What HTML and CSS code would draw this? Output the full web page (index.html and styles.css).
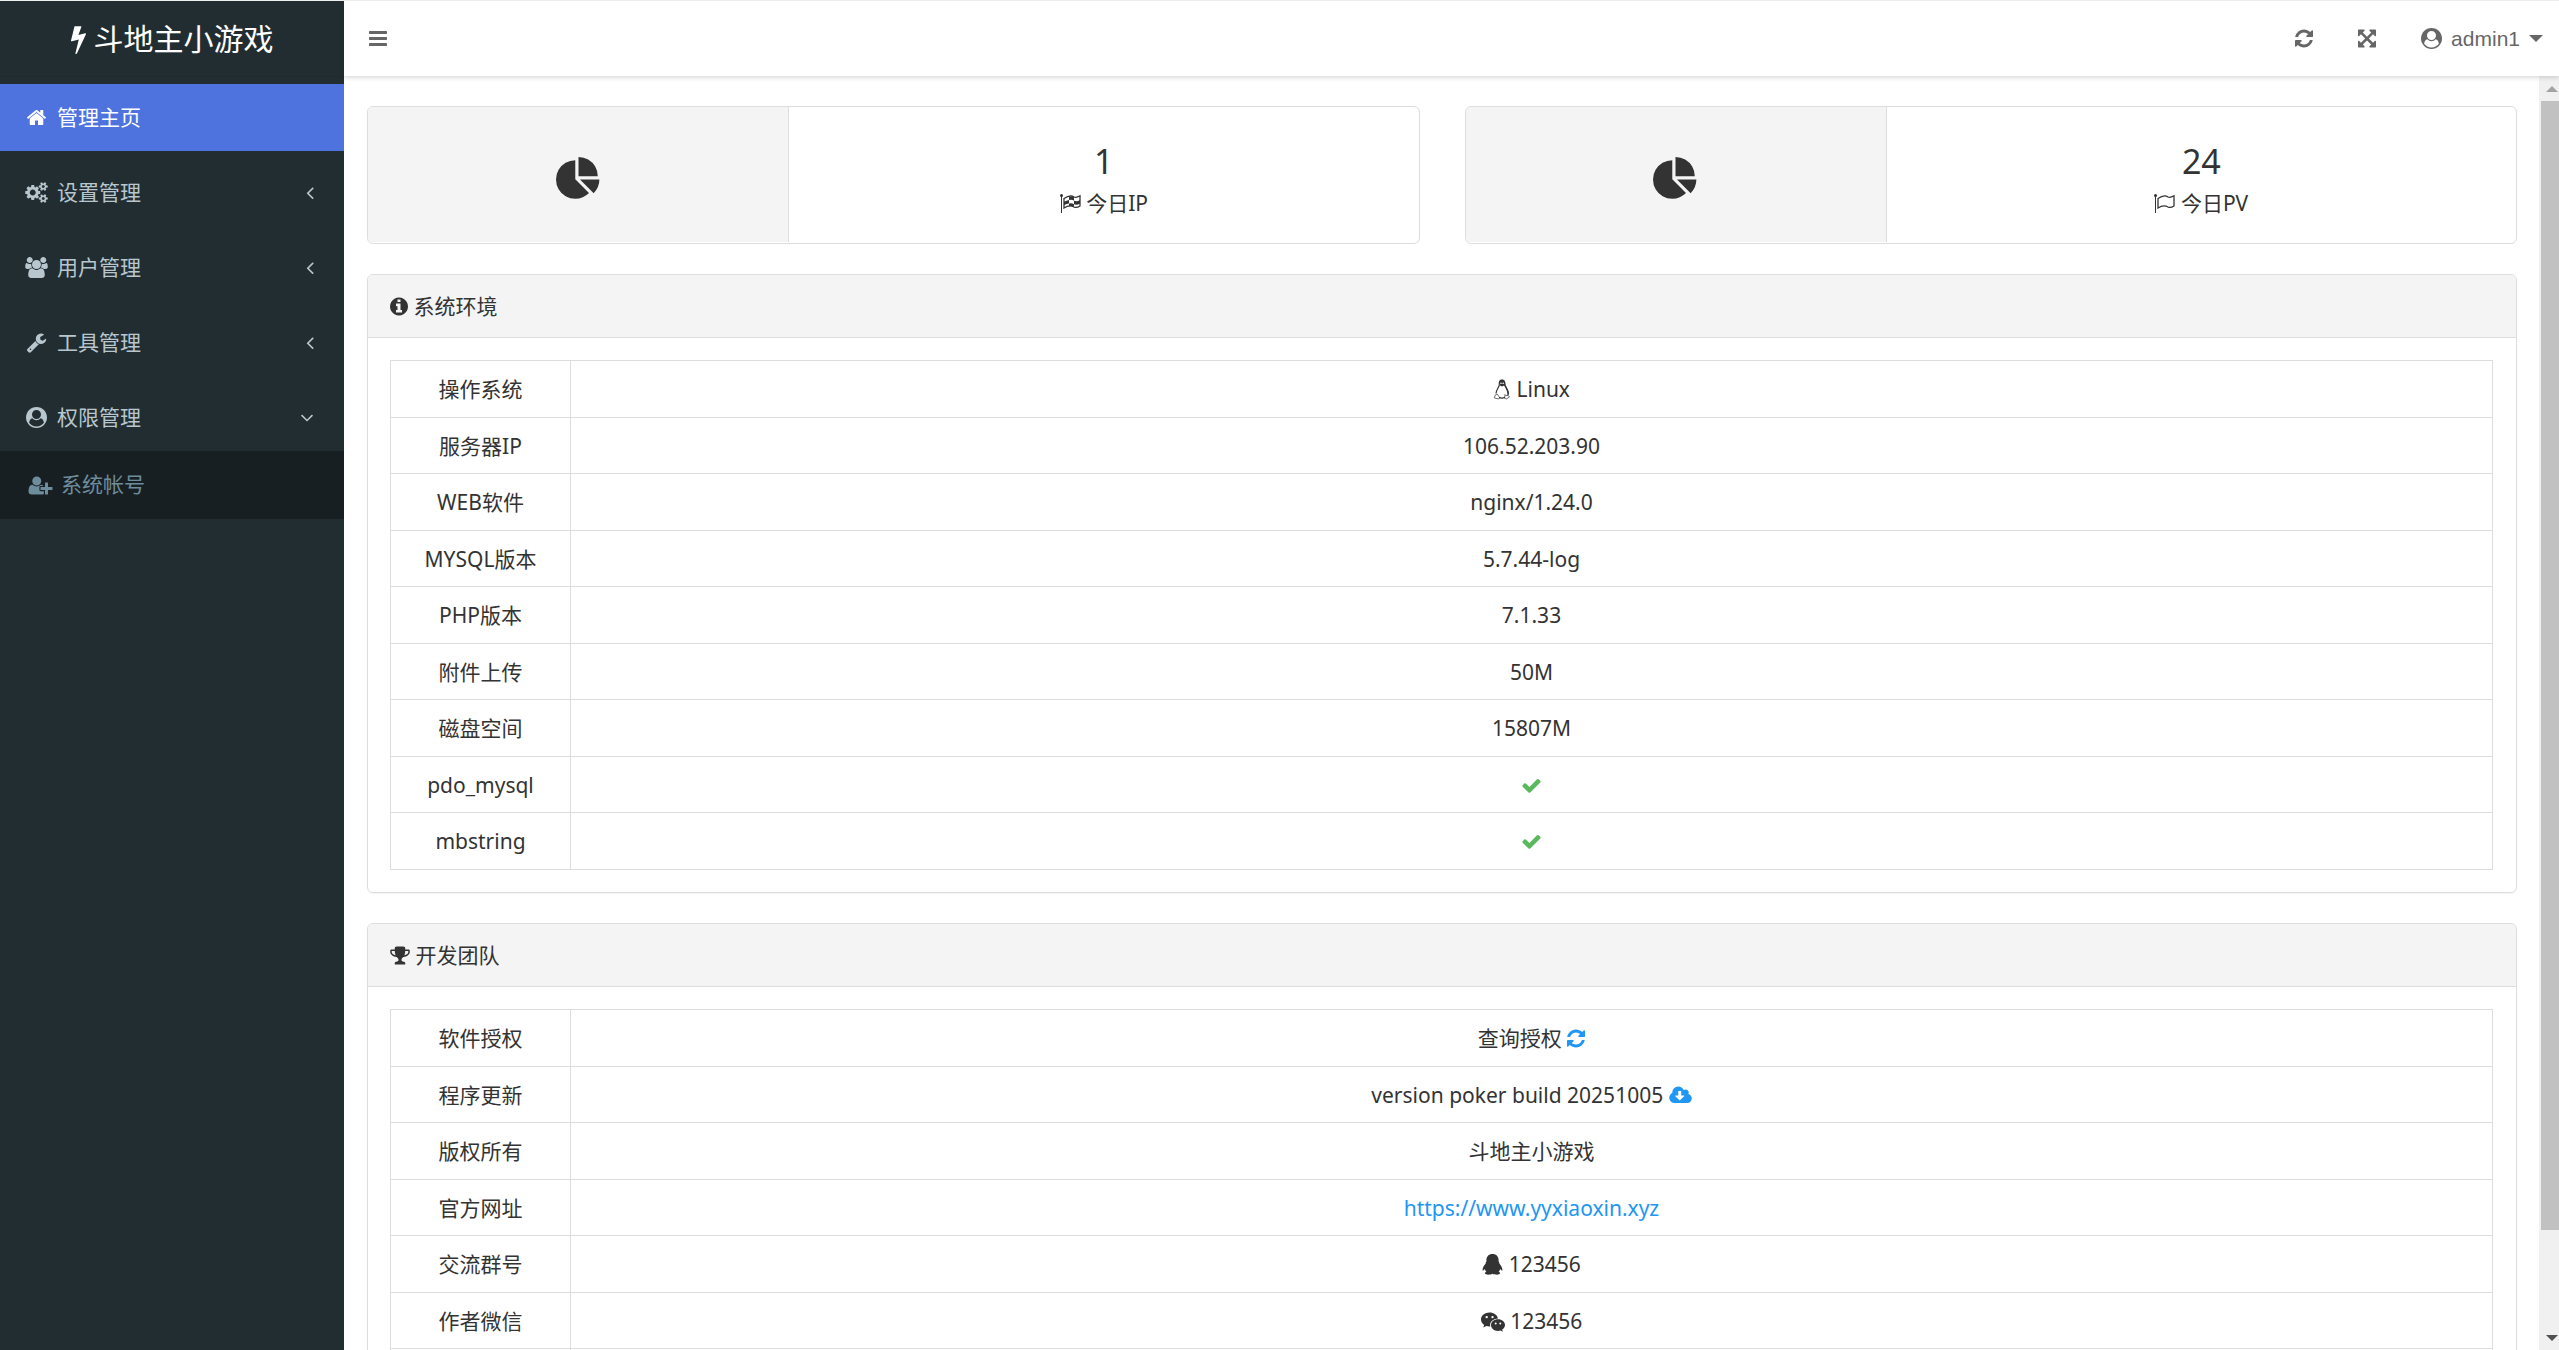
FILE: index.html
```html
<!DOCTYPE html>
<html lang="zh-CN">
<head>
<meta charset="utf-8">
<title>斗地主小游戏</title>
<link rel="stylesheet" href="styles.css">
</head>
<body>
<svg class="sprite" aria-hidden="true">
  <symbol id="bolt" viewBox="448 0 896 1792"><path d="M1333 566q18 20 7 44l-540 1157q-13 25-42 25-4 0-14-2-17-5-25.500-19t-4.500-30l197-808-406 101q-4 1-12 1-18 0-31-11-18-15-13-39l201-825q4-14 16-23t28-9h328q19 0 32 12.500t13 29.500q0 8-5 18l-171 463 396-98q8-2 12-2 19 0 34 15z"/></symbol>
  <symbol id="bars" viewBox="128 0 1536 1792"><path d="M1664 1344v128q0 26-19 45t-45 19h-1408q-26 0-45-19t-19-45v-128q0-26 19-45t45-19h1408q26 0 45 19t19 45zm0-512v128q0 26-19 45t-45 19h-1408q-26 0-45-19t-19-45v-128q0-26 19-45t45-19h1408q26 0 45 19t19 45zm0-512v128q0 26-19 45t-45 19h-1408q-26 0-45-19t-19-45v-128q0-26 19-45t45-19h1408q26 0 45 19t19 45z"/></symbol>
  <symbol id="refresh" viewBox="128 0 1536 1792"><path d="M1639 1056q0 5-1 7-64 268-268 434.500t-478 166.500q-146 0-282.500-55t-243.500-157l-129 129q-19 19-45 19t-45-19-19-45v-448q0-26 19-45t45-19h448q26 0 45 19t19 45-19 45l-137 137q71 66 161 102t187 36q134 0 250-65t186-179q11-17 53-117 8-23 30-23h192q13 0 22.500 9.500t9.500 22.500zm25-800v448q0 26-19 45t-45 19h-448q-26 0-45-19t-19-45 19-45l138-138q-148-137-349-137-134 0-250 65t-186 179q-11 17-53 117-8 23-30 23h-199q-13 0-22.500-9.500t-9.500-22.500v-7q65-268 270-434.500t480-166.500q146 0 284 55.500t245 156.500l130-129q19-19 45-19t45 19 19 45z"/></symbol>
  <symbol id="expand" viewBox="128 0 1536 1792"><path d="M1411 541l-355 355 355 355 144-144q29-31 70-14 39 17 39 59v448q0 26-19 45t-45 19h-448q-42 0-59-40-17-39 14-69l144-144-355-355-355 355 144 144q31 30 14 69-17 40-59 40h-448q-26 0-45-19t-19-45v-448q0-42 40-59 39-17 69 14l144 144 355-355-355-355-144 144q-19 19-45 19-12 0-24-5-40-17-40-59v-448q0-26 19-45t45-19h448q42 0 59 40 17 39-14 69l-144 144 355 355 355-355-144-144q-31-30-14-69 17-40 59-40h448q26 0 45 19t19 45v448q0 42-39 59-13 5-25 5-26 0-45-19z"/></symbol>
  <symbol id="home" viewBox="64 0 1664 1792"><path d="M1472 992v480q0 26-19 45t-45 19h-384v-384h-256v384h-384q-26 0-45-19t-19-45v-480q0-1 .5-3t.5-3l575-474 575 474q1 2 1 6zm223-69l-62 74q-8 9-21 11h-3q-13 0-21-7l-692-577-692 577q-12 8-24 7-13-2-21-11l-62-74q-8-10-7-23.500t11-21.500l719-599q32-26 76-26t76 26l244 204v-195q0-14 9-23t23-9h192q14 0 23 9t9 23v408l219 182q10 8 11 21.500t-7 23.500z"/></symbol>
  <symbol id="cogs" viewBox="-64 0 1920 1792"><path d="M832 896q0-106-75-181t-181-75-181 75-75 181 75 181 181 75 181-75 75-181zm768 512q0-52-38-90t-90-38-90 38-38 90q0 53 37.500 90.500t90.500 37.500 90.500-37.500 37.500-90.500zm0-1024q0-52-38-90t-90-38-90 38-38 90q0 53 37.500 90.500t90.500 37.500 90.500-37.500 37.500-90.500zm-384 421v185q0 10-7 19.500t-16 10.500l-155 24q-11 35-32 76 34 48 90 115 7 11 7 20 0 12-7 19-23 30-82.500 89.500t-78.500 59.500q-11 0-21-7l-115-90q-37 19-77 31-11 108-23 155-7 24-30 24h-186q-11 0-20-7.500t-10-17.500l-23-153q-34-10-75-31l-118 89q-7 7-20 7-11 0-21-8-144-133-144-160 0-9 7-19 10-14 41-53t47-61q-23-44-35-82l-152-24q-10-1-17-9.500t-7-19.500v-185q0-10 7-19.500t16-10.500l155-24q11-35 32-76-34-48-90-115-7-11-7-20 0-12 7-20 22-30 82-89t79-59q11 0 21 7l115 90q34-18 77-32 11-108 23-154 7-24 30-24h186q11 0 20 7.500t10 17.500l23 153q34 10 75 31l118-89q8-7 20-7 11 0 21 8 144 133 144 160 0 9-7 19-12 16-42 54t-45 60q23 48 34 82l152 23q10 2 17 10.500t7 19.500zm640 533v140q0 16-149 31-12 27-30 52 51 113 51 138 0 4-4 7-122 71-124 71-8 0-46-47t-52-68q-20 2-30 2t-30-2q-14 21-52 68t-46 47q-2 0-124-71-4-3-4-7 0-25 51-138-18-25-30-52-149-15-149-31v-140q0-16 149-31 13-29 30-52-51-113-51-138 0-4 4-7 4-2 35-20t59-34 30-16q8 0 46 46.500t52 67.500q20-2 30-2t30 2q51-71 92-112l6-2q4 0 124 70 4 3 4 7 0 25-51 138 17 23 30 52 149 15 149 31zm0-1024v140q0 16-149 31-12 27-30 52 51 113 51 138 0 4-4 7-122 71-124 71-8 0-46-47t-52-68q-20 2-30 2t-30-2q-14 21-52 68t-46 47q-2 0-124-71-4-3-4-7 0-25 51-138-18-25-30-52-149-15-149-31v-140q0-16 149-31 13-29 30-52-51-113-51-138 0-4 4-7 4-2 35-20t59-34 30-16q8 0 46 46.500t52 67.500q20-2 30-2t30 2q51-71 92-112l6-2q4 0 124 70 4 3 4 7 0 25-51 138 17 23 30 52 149 15 149 31z"/></symbol>
  <symbol id="users" viewBox="0 0 1920 1792"><path d="M593 896q-162 5-265 128h-134q-82 0-138-40.500t-56-118.500q0-353 124-353 6 0 43.500 21t97.500 42.500 119 21.500q67 0 133-23-5 37-5 66 0 139 81 256zm1071 637q0 120-73 189.500t-194 69.500h-874q-121 0-194-69.500t-73-189.500q0-53 3.500-103.500t14-109 26.500-108.500 43-97.500 62-81 85.500-53.500 111.500-20q10 0 43 21.500t73 48 107 48 135 21.500 135-21.500 107-48 73-48 43-21.500q61 0 111.500 20t85.500 53.500 62 81 43 97.500 26.500 108.500 14 109 3.500 103.500zm-1024-1277q0 106-75 181t-181 75-181-75-75-181 75-181 181-75 181 75 75 181zm704 384q0 159-112.500 271.500t-271.500 112.500-271.500-112.500-112.500-271.500 112.500-271.500 271.500-112.500 271.500 112.500 112.500 271.500zm576 225q0 78-56 118.500t-138 40.500h-134q-103-123-265-128 81-117 81-256 0-29-5-66 66 23 133 23 59 0 119-21.500t97.500-42.500 43.500-21q124 0 124 353zm-128-609q0 106-75 181t-181 75-181-75-75-181 75-181 181-75 181 75 75 181z"/></symbol>
  <symbol id="wrench" viewBox="64 0 1664 1792"><path d="M448 1472q0-26-19-45t-45-19-45 19-19 45 19 45 45 19 45-19 19-45zm644-420l-682 682q-37 37-90 37-52 0-91-37l-106-108q-38-36-38-90 0-53 38-91l681-681q39 98 114.500 173.500t173.500 114.500zm634-435q0 39-23 106-47 134-164.500 217.500t-258.500 83.500q-185 0-316.500-131.500t-131.500-316.500 131.500-316.500 316.500-131.500q58 0 121.500 16.500t107.500 46.500q16 11 16 28t-16 28l-293 169v224l193 107q5-3 79-48.500t135.500-81 70.500-35.500q15 0 23.500 10t8.500 25z"/></symbol>
  <symbol id="user-circle" viewBox="0 0 1792 1792"><path d="M1523 1339q-22-155-87.500-257.500t-184.500-118.500q-67 74-159.500 115.500t-195.500 41.500-195.500-41.500-159.500-115.500q-119 16-184.500 118.500t-87.500 257.500q106 150 271 237.500t356 87.500 356-87.500 271-237.500zm-243-699q0-159-112.500-271.500t-271.500-112.500-271.500 112.500-112.500 271.500 112.500 271.500 271.500 112.500 271.500-112.500 112.500-271.500zm512 256q0 182-71 347.500t-190.500 286-285.500 191.500-349 71q-182 0-348-71t-286-191-191-286-71-348 71-348 191-286 286-191 348-71 348 71 286 191 191 286 71 348z"/></symbol>
  <symbol id="user-plus" viewBox="0 0 2048 1792"><path d="M704 896q-159 0-271.500-112.500t-112.500-271.500 112.500-271.500 271.500-112.500 271.500 112.500 112.500 271.500-112.500 271.500-271.500 112.500zm960 128h352q13 0 22.500 9.500t9.500 22.500v192q0 13-9.500 22.500t-22.500 9.500h-352v352q0 13-9.500 22.500t-22.500 9.500h-192q-13 0-22.500-9.500t-9.500-22.500v-352h-352q-13 0-22.500-9.500t-9.500-22.500v-192q0-13 9.500-22.500t22.500-9.500h352v-352q0-13 9.500-22.500t22.500-9.500h192q13 0 22.500 9.500t9.500 22.500v352zm-736 224q0 52 38 90t90 38h256v238q-68 50-171 50h-874q-121 0-194-69t-73-190q0-53 3.500-103.500t14-109 26.500-108.500 43-97.500 62-81 85.500-53.500 111.500-20q19 0 39 17 79 61 154.500 91.500t164.500 30.500 164.500-30.500 154.500-91.500q20-17 39-17 132 0 217 96h-223q-52 0-90 38t-38 90v192z"/></symbol>
  <symbol id="angle-left" viewBox="576 0 640 1792"><path d="M1203 544q0 13-10 23l-393 393 393 393q10 10 10 23t-10 23l-50 50q-10 10-23 10t-23-10l-466-466q-10-10-10-23t10-23l466-466q10-10 23-10t23 10l50 50q10 10 10 23z"/></symbol>
  <symbol id="angle-down" viewBox="320 0 1152 1792"><path d="M1395 736q0 13-10 23l-466 466q-10 10-23 10t-23-10l-466-466q-10-10-10-23t10-23l50-50q10-10 23-10t23 10l393 393 393-393q10-10 23-10t23 10l50 50q10 10 10 23z"/></symbol>
  <symbol id="pie" viewBox="0 0 1792 1792"><path d="M768 890l546 546q-106 108-247.500 168t-298.500 60q-209 0-385.500-103t-279.500-279.500-103-385.500 103-385.500 279.500-279.500 385.500-103v762zm187 6h773q0 157-60 298.500t-168 247.500zm709-128h-768v-768q209 0 385.500 103t279.500 279.500 103 385.500z"/></symbol>
  <symbol id="info" viewBox="128 0 1536 1792"><path d="M1152 1376v-160q0-14-9-23t-23-9h-96v-512q0-14-9-23t-23-9h-320q-14 0-23 9t-9 23v160q0 14 9 23t23 9h96v320h-96q-14 0-23 9t-9 23v160q0 14 9 23t23 9h448q14 0 23-9t9-23zm-128-896v-160q0-14-9-23t-23-9h-192q-14 0-23 9t-9 23v160q0 14 9 23t23 9h192q14 0 23-9t9-23zm640 416q0 209-103 385.500t-279.500 279.500-385.500 103-385.500-103-279.500-279.500-103-385.500 103-385.500 279.500-279.500 385.500-103 385.500 103 279.500 279.500 103 385.500z"/></symbol>
  <symbol id="trophy" viewBox="64 0 1664 1792"><path d="M522 883q-74-162-74-371h-256v96q0 78 94.500 162t235.500 113zm1078-275v-96h-256q0 209-74 371 141-29 235.500-113t94.500-162zm128-128v128q0 71-41.500 143t-112 130-173 97.500-215.500 44.500q-42 54-95 95-38 34-52.500 72.500t-14.500 89.500q0 54 30.500 91t97.500 37q75 0 133.500 45.500t58.500 114.500v64q0 14-9 23t-23 9h-832q-14 0-23-9t-9-23v-64q0-69 58.500-114.500t133.500-45.500q67 0 97.500-37t30.500-91q0-51-14.500-89.500t-52.500-72.500q-53-41-95-95-113-5-215.500-44.500t-173-97.500-112-130-41.500-143v-128q0-40 28-68t68-28h288v-96q0-66 47-113t113-47h576q66 0 113 47t47 113v96h288q40 0 68 28t28 68z"/></symbol>
  <symbol id="check" viewBox="0 0 1792 1792"><path d="M1671 566q0 40-28 68l-724 724-136 136q-28 28-68 28t-68-28l-136-136-362-362q-28-28-28-68t28-68l136-136q28-28 68-28t68 28l294 295 656-657q28-28 68-28t68 28l136 136q28 28 28 68z"/></symbol>
  <symbol id="cloud" viewBox="-64 0 1920 1792"><path d="M1216 928q0-14-9-23t-23-9h-224v-352q0-13-9.500-22.500t-22.500-9.500h-192q-13 0-22.500 9.500t-9.500 22.500v352h-224q-13 0-22.500 9.500t-9.500 22.500q0 14 9 23l352 352q9 9 23 9t23-9l351-351q10-12 10-24zm640 224q0 159-112.500 271.500t-271.500 112.500h-1088q-185 0-316.500-131.500t-131.500-316.500q0-130 70-240t188-165q-2-30-2-43 0-212 150-362t362-150q156 0 285.500 87t188.500 231q71-62 166-62 106 0 181 75t75 181q0 76-41 138 130 31 213.500 135.500t83.500 238.500z"/></symbol>
  <symbol id="flag" viewBox="0 0 21 21"><circle cx="1.500" cy="2.500" r="1.500"/><path d="M1 3h1v17H1z"/><path d="M4 5.500C9 2 12 2.500 14 4c2 1 4 0 6-1.200V13c-2 1.300-4 2-6 1C11 12.300 8 12.500 4 15z" fill="none" stroke="currentColor" stroke-width="1.300"/></symbol>
  <symbol id="flag-check" viewBox="0 0 21 21"><circle cx="1.500" cy="2.500" r="1.500"/><path d="M1 3h1v17H1z"/><path d="M4 5.500C9 2 12 2.500 14 4c2 1 4 0 6-1.200V13c-2 1.300-4 2-6 1C11 12.300 8 12.500 4 15z" fill="none" stroke="currentColor" stroke-width="1.300"/><path d="M9 3.500q3-1 5 .7v3.600q-2-1.700-5-.7zM4 8.800q2.500-1.500 5-1.900v3.600q-2.500.3-5 1.700zM14 7.700q3 1.300 6-.8v3.500q-3 2-6 .9zM9 10.400q3-.7 5 .8V14q-2-1.500-5-.8z"/></symbol>
  <symbol id="linux" viewBox="0 0 18 21"><path d="M6.300 5.500C6 2.800 7 1.200 9 1.200s3 1.500 2.900 4c0 2.600 3.400 5 3.400 9.300 0 1-.2 1.500-.6 2" fill="none" stroke="currentColor" stroke-width="1.200"/><path d="M6.300 5.500c.3 2.500-3.300 5.200-3.300 9M6 18.600q3 1 6-.2" fill="none" stroke="currentColor" stroke-width="1.200"/><path d="M6 4.500C5.800 2 7 .8 9 .8s3.200 1.300 3.100 4.200c.1 2.800 3.600 5.500 3.600 9.500l-1.200 1.400c0-3.700-1.500-6.200-3.400-9.300L9 7.600 7 6.400z"/><g fill="#fff"><circle cx="8" cy="4.300" r=".8"/><circle cx="10.200" cy="4.300" r=".8"/></g><path d="M2.400 15.900l1.800-.8 2.600 3.500-1.300 1.400-4.200-1.100zM12 15.500l1 1.300 1.800-.6 1.700 1.800-3.300 2-1.600-.8z" fill="none" stroke="currentColor" stroke-width=".7"/></symbol>
  <symbol id="qq" viewBox="0 0 21 21"><path d="M10.500 0C6.600 0 4.400 2.700 4.400 6v1.500C3.700 8.200 3.600 9 3.700 9.500 2 11.500.5 13.800.6 16c.1 1.300.8.700 2.100-1 .3 1 .9 2 1.700 2.800-1.200.5-1.700 1-1.400 1.800.5 1.600 5.500 1.300 7.500.2 2 1.100 7 1.400 7.500-.2.300-.8-.2-1.300-1.400-1.800.8-.8 1.400-1.800 1.700-2.800 1.300 1.700 2 2.300 2.100 1 .1-2.200-1.400-4.500-3.100-6.500.1-.5 0-1.300-.7-2V6c0-3.300-2.200-6-6.100-6z"/></symbol>
  <symbol id="wechat" viewBox="0 0 24 21"><path fill-rule="evenodd" d="M8.500 1.500C3.800 1.500 0 4.600 0 8.500c0 2.200 1.200 4.100 3.100 5.400L2.300 16.500l3-1.500c1.100.3 2.100.5 3.200.5h.8c-1.100-4.300 2.700-8 7.700-8C16.300 3.900 12.700 1.500 8.500 1.500zM5.700 4.900a1.200 1.200 0 1 1 0 2.400 1.200 1.200 0 0 1 0-2.400zm5.800 0a1.200 1.200 0 1 1 0 2.400 1.200 1.200 0 0 1 0-2.400z"/><path fill-rule="evenodd" d="M17 8.200c-4 0-7 2.600-7 5.800s3 5.900 7 5.900c.9 0 1.700-.2 2.500-.4l2.300 1.300-.6-2.200c1.700-1.200 2.800-2.700 2.800-4.600 0-3.200-3.100-5.800-7-5.800zm-2.300 3.200a1 1 0 1 1 0 2 1 1 0 0 1 0-2zm4.600 0a1 1 0 1 1 0 2 1 1 0 0 1 0-2z"/></symbol>
</svg>

<div class="app">
  <aside class="sidebar">
    <h1 class="brand"><svg class="brand-icon"><use href="#bolt"/></svg> 斗地主小游戏</h1>
    <nav class="menu">
      <a class="item active" href="#"><svg class="fw"><use href="#home"/></svg><span>管理主页</span></a>
      <a class="item" href="#"><svg class="fw"><use href="#cogs"/></svg><span>设置管理</span><svg class="arrow"><use href="#angle-left"/></svg></a>
      <a class="item" href="#"><svg class="fw"><use href="#users"/></svg><span>用户管理</span><svg class="arrow"><use href="#angle-left"/></svg></a>
      <a class="item" href="#"><svg class="fw"><use href="#wrench"/></svg><span>工具管理</span><svg class="arrow"><use href="#angle-left"/></svg></a>
      <a class="item" href="#"><svg class="fw"><use href="#user-circle"/></svg><span>权限管理</span><svg class="arrow open"><use href="#angle-down"/></svg></a>
      <a class="item sub" href="#"><svg class="fw"><use href="#user-plus"/></svg><span>系统帐号</span></a>
    </nav>
  </aside>

  <div class="main">
    <header class="topbar">
      <button class="tool" type="button" aria-label="菜单"><svg class="icon w18"><use href="#bars"/></svg></button>
      <div class="tools">
        <button class="tool" type="button" aria-label="刷新"><svg class="icon w18"><use href="#refresh"/></svg></button>
        <button class="tool" type="button" aria-label="全屏"><svg class="icon w18"><use href="#expand"/></svg></button>
        <button class="tool user" type="button"><svg class="icon w21"><use href="#user-circle"/></svg><span>admin1</span><i class="caret"></i></button>
      </div>
    </header>

    <div class="view">
      <main class="content">
        <div class="stats">
          <section class="stat">
            <div class="stat-icon"><svg class="pie"><use href="#pie"/></svg></div>
            <div class="stat-body"><div class="num">1</div><div class="label"><svg class="icon w21"><use href="#flag-check"/></svg> 今日IP</div></div>
          </section>
          <section class="stat">
            <div class="stat-icon"><svg class="pie"><use href="#pie"/></svg></div>
            <div class="stat-body"><div class="num">24</div><div class="label"><svg class="icon w21"><use href="#flag"/></svg> 今日PV</div></div>
          </section>
        </div>

        <section class="panel">
          <h2 class="panel-head"><svg class="icon w18"><use href="#info"/></svg> 系统环境</h2>
          <div class="panel-body">
            <table class="grid">
              <tr><th scope="row">操作系统</th><td><svg class="icon w18"><use href="#linux"/></svg> Linux</td></tr>
              <tr><th scope="row">服务器IP</th><td>106.52.203.90</td></tr>
              <tr><th scope="row">WEB软件</th><td>nginx/1.24.0</td></tr>
              <tr><th scope="row">MYSQL版本</th><td>5.7.44-log</td></tr>
              <tr><th scope="row">PHP版本</th><td>7.1.33</td></tr>
              <tr><th scope="row">附件上传</th><td>50M</td></tr>
              <tr><th scope="row">磁盘空间</th><td>15807M</td></tr>
              <tr><th scope="row">pdo_mysql</th><td><svg class="icon w21 ok"><use href="#check"/></svg></td></tr>
              <tr><th scope="row">mbstring</th><td><svg class="icon w21 ok"><use href="#check"/></svg></td></tr>
            </table>
          </div>
        </section>

        <section class="panel">
          <h2 class="panel-head"><svg class="icon w20"><use href="#trophy"/></svg> 开发团队</h2>
          <div class="panel-body">
            <table class="grid">
              <tr><th scope="row">软件授权</th><td>查询授权 <a href="#" aria-label="刷新授权"><svg class="icon w18"><use href="#refresh"/></svg></a></td></tr>
              <tr><th scope="row">程序更新</th><td>version poker build 20251005 <a href="#" aria-label="下载更新"><svg class="icon w23"><use href="#cloud"/></svg></a></td></tr>
              <tr><th scope="row">版权所有</th><td>斗地主小游戏</td></tr>
              <tr><th scope="row">官方网址</th><td><a href="#">https://www.yyxiaoxin.xyz</a></td></tr>
              <tr><th scope="row">交流群号</th><td><svg class="icon w21"><use href="#qq"/></svg> 123456</td></tr>
              <tr><th scope="row">作者微信</th><td><svg class="icon w24"><use href="#wechat"/></svg> 123456</td></tr>
              <tr><th scope="row"></th><td></td></tr>
            </table>
          </div>
        </section>
      </main>
      <div class="scrollbar" aria-hidden="true"><i class="up"></i><i class="thumb"></i><i class="down"></i></div>
    </div>
  </div>
</div>
</body>
</html>
```
FILE: styles.css
```css
* { box-sizing: border-box; }

body {
  margin: 0;
  color: #333;
  background: #fff;
  font: 21px/30px "Noto Sans", "Noto Sans CJK SC", sans-serif;
}

a { color: #2196f3; text-decoration: none; }
h1, h2 { margin: 0; font-weight: 400; }
svg { fill: currentColor; }
.sprite { display: none; }

.app {
  display: flex;
  height: 100vh;
  overflow: hidden;
  border-top: 1px solid #eee;
}

/* Sidebar */
.sidebar { flex: none; width: 344px; background: #222d32; }

.brand {
  height: 76px;
  border-bottom: 1px solid #1f292e;
  color: #fff;
  font-size: 30px;
  line-height: 76px;
  text-align: center;
}
.brand-icon { width: 15px; height: 30px; vertical-align: -4px; }

.menu { display: flex; flex-direction: column; gap: 8px; padding-top: 7px; }

.item {
  display: flex;
  align-items: center;
  gap: 7px;
  height: 67px;
  padding: 0 30px 0 23px;
  color: #b8c7ce;
}
.item span { padding-bottom: 2px; }
.item.active { background: #4e73df; color: #fff; }
.item.sub {
  height: 68px;
  margin-top: -8px;
  padding-left: 27px;
  background: #181f22;
  color: #6d8c9c;
}
.fw { flex: none; width: 27px; height: 21px; }
.arrow { width: 8px; height: 21px; margin-left: auto; }
.arrow.open { width: 14px; }

/* Top bar */
.main { display: flex; flex: 1; flex-direction: column; min-width: 0; }

.topbar {
  z-index: 1;
  display: flex;
  flex: none;
  align-items: center;
  justify-content: space-between;
  height: 75px;
  padding: 0 16px 0 25px;
  background: #fff;
  box-shadow: 0 1px 5px rgba(34, 45, 50, .22);
}
.tools { display: flex; gap: 45px; }
.tool {
  display: flex;
  align-items: center;
  padding: 0;
  border: 0;
  background: none;
  color: #666;
  font: 21px/30px "Liberation Sans", Arial, sans-serif;
}
.user { gap: 9px; }
.caret {
  border: 7px solid transparent;
  border-top: 7px solid #666;
  border-bottom: 0;
}

.icon { height: 21px; vertical-align: -3px; }
.w18 { width: 18px; }
.w20 { width: 20px; }
.w21 { width: 21px; }
.w23 { width: 23px; }
.w24 { width: 24px; }
.ok { color: #5cb85c; }

/* Content */
.view { display: flex; flex: 1; min-height: 0; }
.content { flex: 1; min-width: 0; padding: 30px 22px 0 23px; overflow: hidden; }

.stats {
  display: grid;
  grid-template-columns: 1fr 1fr;
  gap: 45px;
  margin-bottom: 30px;
}
.stat {
  display: flex;
  height: 138px;
  padding-bottom: 1px;
  border: 1px solid #ddd;
  border-radius: 6px;
  overflow: hidden;
}
.stat-icon {
  display: flex;
  box-sizing: content-box;
  justify-content: center;
  width: 40%;
  border-right: 1px solid #ddd;
  background: #f4f4f4;
}
.pie { width: 45px; height: 45px; margin-top: 50px; }
.stat-body { flex: 1; padding-top: 30px; text-align: center; }
.num { font-size: 34px; line-height: 48px; }
.label { line-height: 36px; }

.panel {
  margin-bottom: 30px;
  border: 1px solid #ddd;
  border-radius: 6px;
  box-shadow: 0 1px 1px rgba(0, 0, 0, .05);
  overflow: hidden;
}
.panel-head {
  height: 63px;
  padding: 0 22px;
  border-bottom: 1px solid #ddd;
  background: #f4f4f4;
  font-size: 21px;
  line-height: 62px;
}
.panel-body { padding: 22px 23px 22px 22px; }

.grid {
  width: 100%;
  border: solid #ddd;
  border-width: 1px 0 0 1px;
  border-spacing: 0;
  table-layout: fixed;
  text-align: center;
}
.grid th, .grid td {
  height: 56px;
  padding: 0;
  border: solid #ddd;
  border-width: 0 1px 1px 0;
  font-weight: 400;
}
.grid tr:nth-child(odd) > * { height: 57px; }
.grid th { width: 180px; }

/* Scroll track beside the content */
.scrollbar {
  display: flex;
  flex: none;
  flex-direction: column;
  align-items: center;
  width: 20px;
  padding-left: 2px;
  background: #f0f0f0;
}
.up, .down { border: 6px solid transparent; }
.up { margin: 10px 0 9px 3px; border-top: 0; border-bottom: 6px solid #a3a3a3; }
.thumb { flex: 1; width: 100%; margin-bottom: 105px; background: #c1c1c1; }
.down { margin: 0 0 9px 3px; border-bottom: 0; border-top: 6px solid #505050; }
```
